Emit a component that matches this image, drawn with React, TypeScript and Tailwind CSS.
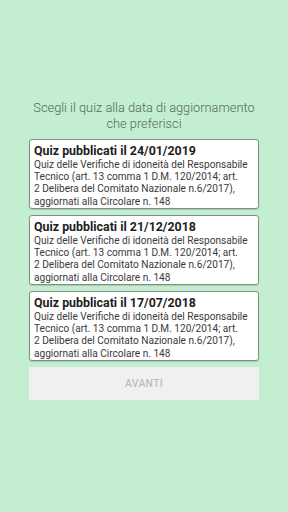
const quizzes = ["24/01/2019", "21/12/2018", "17/07/2018"];

const lines = [
  "Quiz delle Verifiche di idoneità del Responsabile",
  "Tecnico (art. 13 comma 1 D.M. 120/2014; art.",
  "2 Delibera del Comitato Nazionale n.6/2017),",
  "aggiornati alla Circolare n. 148",
];

export default function App() {
  return (
    <div
      className="w-[288px] h-[512px] bg-[#c4eed1] flex flex-col items-center"
      style={{ fontFamily: "Roboto, 'Noto Sans', sans-serif" }}
    >
      <h1 className="mt-[100px] text-[12.8px] leading-[16px] font-light text-center text-[#4f6b57]">
        Scegli il quiz alla data di aggiornamento
        <br />
        che preferisci
      </h1>

      <div className="mt-[7px] w-[230px] flex flex-col gap-[6px]">
        {quizzes.map((d) => (
          <div
            key={d}
            className="h-[70px] bg-white border border-[#7f8f84] rounded-[3px] shadow-[0_1px_1px_rgba(0,0,0,0.15)] px-[4px] pt-[3px]"
          >
            <div className="text-[12.4px] leading-[16px] font-bold text-[#1e1e1e]">
              Quiz pubblicati il {d}
            </div>
            <div className="text-[10.1px] leading-[12.2px] text-[#3a3a3a]">
              {lines.map((l) => (
                <div key={l} className="whitespace-nowrap">
                  {l}
                </div>
              ))}
            </div>
          </div>
        ))}

        <button className="h-[33px] bg-[#f0f0f0] text-[#bdbdbd] text-[10.5px] font-medium tracking-wide">
          AVANTI
        </button>
      </div>
    </div>
  );
}
